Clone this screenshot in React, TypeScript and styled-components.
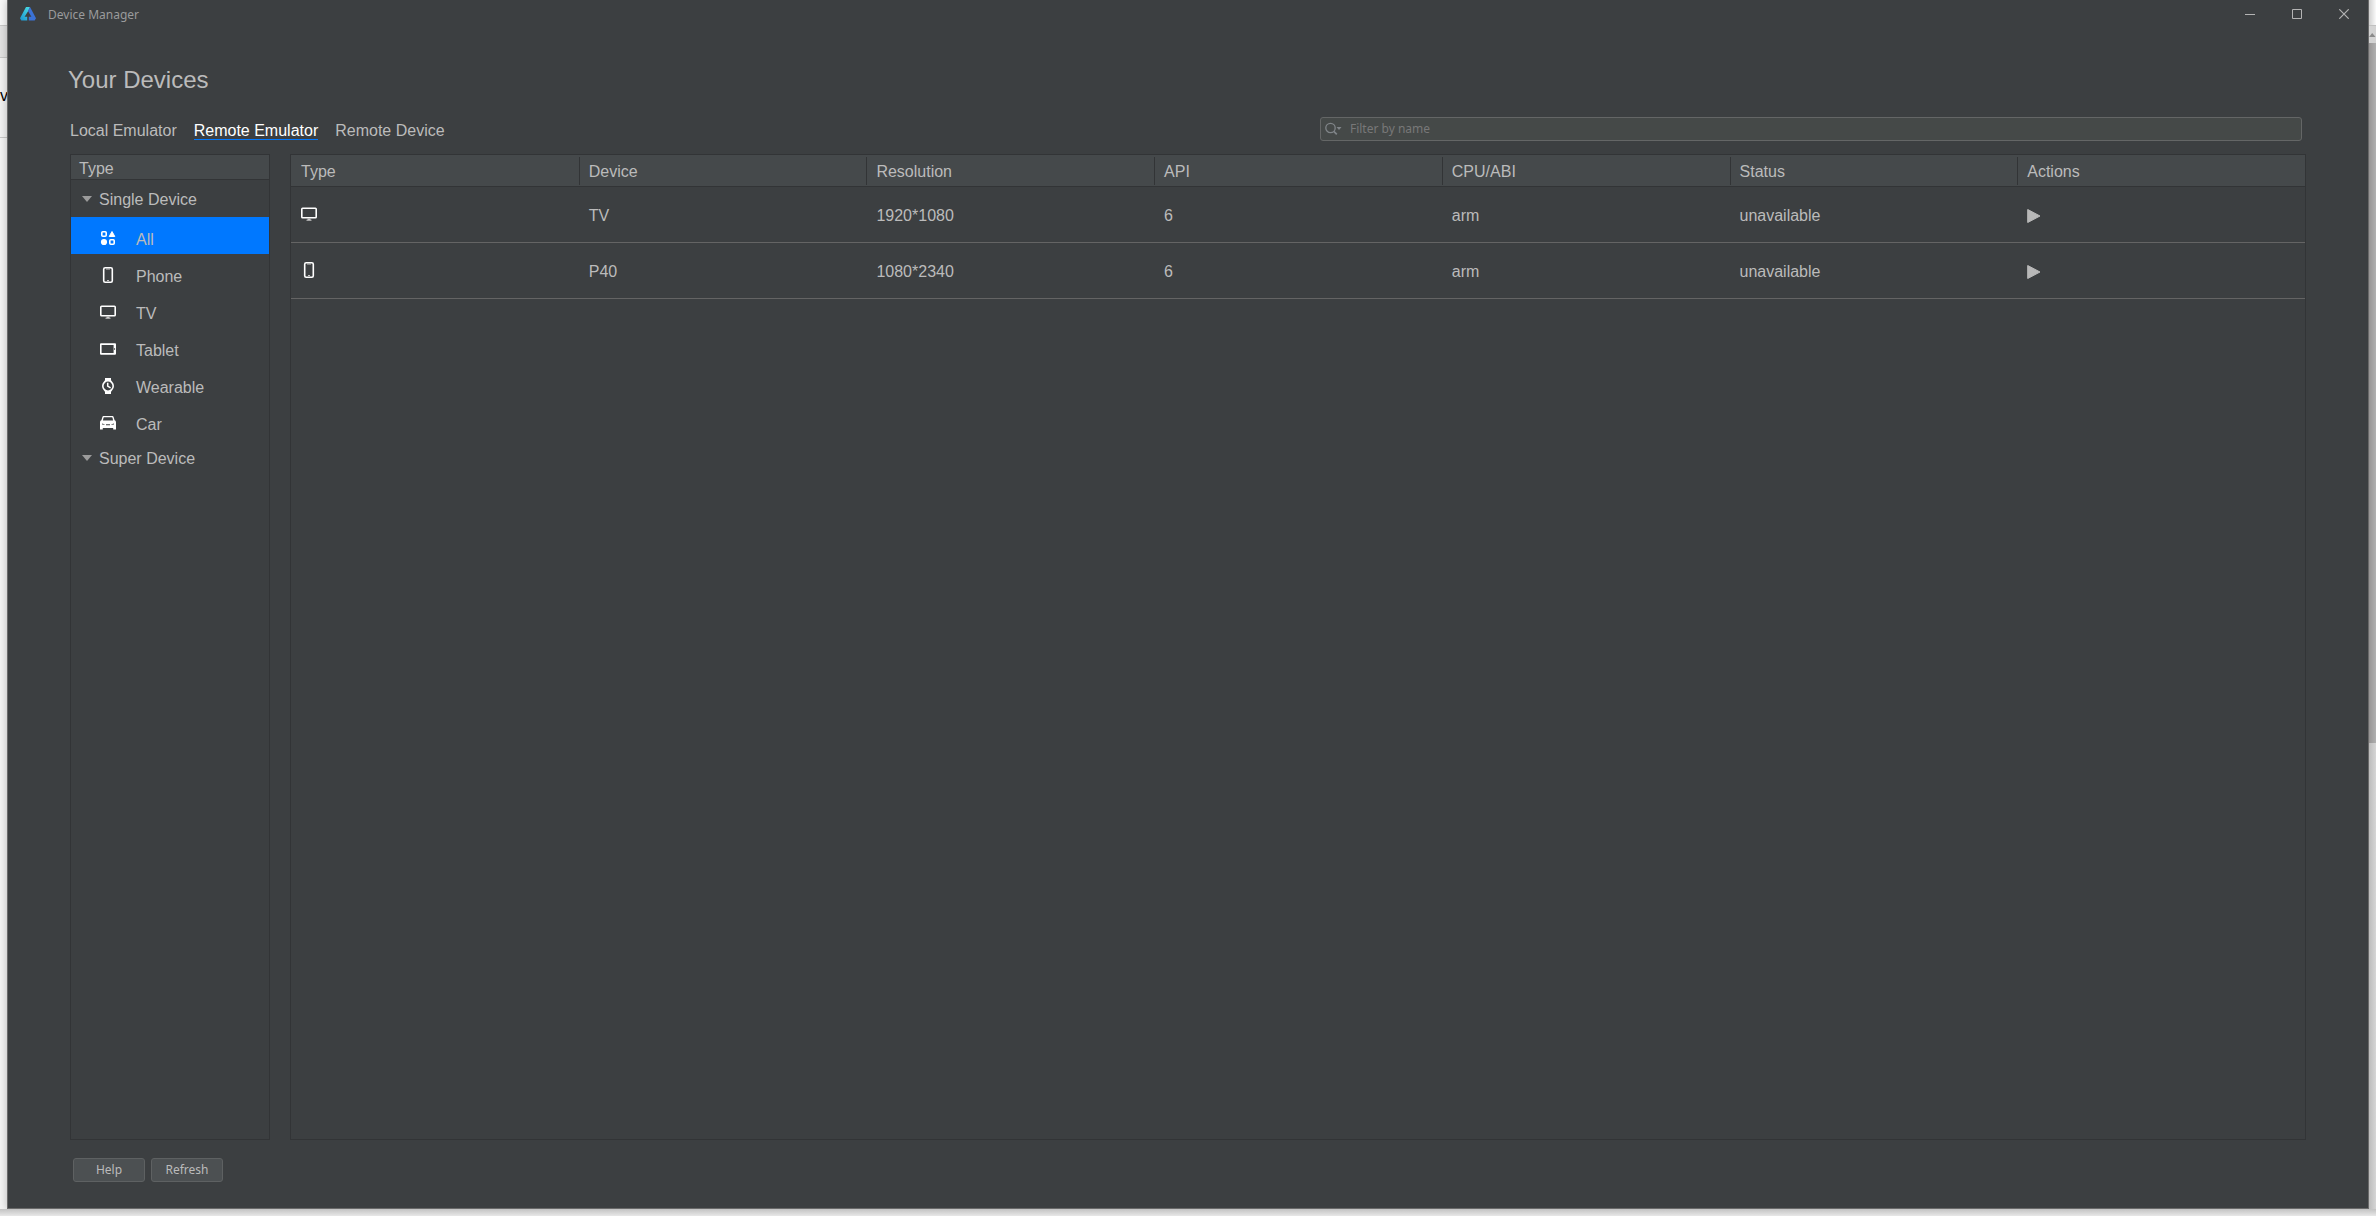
import React, { useState } from "react";
import styled, { createGlobalStyle } from "styled-components";

const color = {
  window: "#3c3f41",
  header: "#45494b",
  line: "#323436",
  rowLine: "#646464",
  text: "#bbbbbb",
  faint: "#9a9b9c",
  select: "#0078ff",
};
const sans = `"Liberation Sans", Arial, sans-serif`;
const ui = `"Noto Sans", "Segoe UI", sans-serif`;

const GlobalStyle = createGlobalStyle`
  *, *::before, *::after { box-sizing: border-box; }
  body { margin: 0; font-family: ${sans}; font-size: 16px; color: ${color.text}; background: #f4f4f4; }
  button { font: inherit; color: inherit; background: none; border: 0; padding: 0; cursor: pointer; }
  svg { display: block; flex: none; }
  ul { list-style: none; margin: 0; padding: 0; }
`;

const Desktop = styled.div`
  display: grid;
  grid-template: minmax(0, 1fr) 7px / 7px minmax(0, 1fr) 7px;
  height: 100vh;
  overflow: hidden;
`;
const LeftEdge = styled.div`
  display: flex;
  flex-direction: column;
  overflow: hidden;
  color: #000;
  line-height: 20px;
`;
const EdgeBand = styled.div<{ $height: number; $bg: string }>`
  flex: none;
  height: ${(p) => p.$height}px;
  padding-top: ${(p) => (p.$height > 60 ? 28 : 0)}px;
  background: ${(p) => p.$bg};
  border-bottom: 1px solid #c8c8c8;
`;
const RightEdge = styled.div`
  display: flex;
  flex-direction: column;
  overflow: hidden;
  background: linear-gradient(90deg, #bcbcbc, #d6d6d6);
`;
const ScrollTop = styled.div`
  height: 26px;
  background: linear-gradient(90deg, #d0d0d0, #fafafa);
  border-bottom: 1px solid #c0c0c0;
`;
const ScrollArrow = styled.div`
  height: 17px;
  padding-top: 7px;
  background: #d3d3d3;
`;
const ScrollThumb = styled.div`
  height: 700px;
  background: linear-gradient(90deg, #969494, #b0b0b0);
`;
const BottomEdge = styled.div`
  grid-column: 1 / -1;
  background: linear-gradient(#c2c2c2, #e8e8e8);
`;

const Window = styled.main`
  display: flex;
  flex-direction: column;
  background: ${color.window};
  border: 1px solid #6a6a6a;
  border-top: 0;
  box-shadow: 0 0 8px rgba(0, 0, 0, 0.25);
`;
const TitleBar = styled.header`
  display: flex;
  align-items: center;
  gap: 12px;
  height: 28px;
  padding: 0 1px 0 12px;
  font: 12px/20px ${ui};
  color: ${color.faint};
`;
const TitleText = styled.span`
  flex: 1;
  padding-top: 1px;
`;
const WindowButtons = styled.div`
  display: flex;
`;
const WindowButton = styled.button`
  display: grid;
  place-items: center;
  width: 47px;
  height: 28px;
  color: #b4b4b4;
`;

const Content = styled.div`
  flex: 1;
  min-height: 0;
  display: flex;
  flex-direction: column;
  padding: 36px 62px 26px;
`;
const Heading = styled.h1`
  margin: 0 0 21px -2px;
  font-size: 24px;
  font-weight: 400;
  line-height: 32px;
`;
const Toolbar = styled.div`
  display: flex;
  justify-content: space-between;
  height: 24px;
  margin-bottom: 13px;
  padding-right: 4px;
`;
const Tabs = styled.div`
  display: flex;
  align-items: flex-start;
  gap: 17px;
`;
const Tab = styled.button<{ $active: boolean }>`
  padding-top: 6px;
  line-height: 16px;
  white-space: nowrap;
  color: ${(p) => (p.$active ? "#ffffff" : color.text)};
  border-bottom: 1px solid ${(p) => (p.$active ? color.select : "transparent")};
`;
const SearchBox = styled.label`
  display: flex;
  align-items: center;
  gap: 8px;
  width: 44%;
  padding-left: 4px;
  background: #454948;
  border: 1px solid #646666;
  border-radius: 3px;
  color: #808589;
`;
const SearchInput = styled.input`
  flex: 1;
  min-width: 0;
  padding: 0;
  border: 0;
  outline: 0;
  background: none;
  font: 12px/20px ${ui};
  color: ${color.text};
  &::placeholder {
    color: #787878;
    opacity: 1;
  }
`;

const Panels = styled.div`
  flex: 1;
  min-height: 0;
  display: grid;
  grid-template-columns: 200px minmax(0, 1fr);
  gap: 20px;
`;
const Panel = styled.section`
  border: 1px solid ${color.line};
  overflow: hidden;
`;
const PanelTitle = styled.h2`
  margin: 0;
  padding: 3px 8px 0;
  height: 25px;
  font-size: 16px;
  font-weight: 400;
  line-height: 21px;
  background: ${color.header};
  border-bottom: 1px solid ${color.line};
`;
const Group = styled.button`
  display: flex;
  align-items: center;
  gap: 7px;
  width: 100%;
  height: 37px;
  padding: 2px 11px 0;
  text-align: left;
`;
const Item = styled.button<{ $active: boolean }>`
  display: flex;
  align-items: center;
  gap: 20px;
  width: 100%;
  height: 37px;
  padding: 8px 0 0 29px;
  text-align: left;
  background: ${(p) => (p.$active ? color.select : "transparent")};
  svg {
    margin-bottom: 3px;
  }
`;

const Table = styled.table`
  width: 100%;
  table-layout: fixed;
  border-spacing: 0;
  text-align: left;
`;
const HeadCell = styled.th`
  height: 32px;
  padding: 2px 10px 0;
  font-weight: 400;
  border-bottom: 1px solid ${color.line};
  background-color: ${color.header};
  & + & {
    background-image: linear-gradient(${color.line}, ${color.line});
    background-repeat: no-repeat;
    background-position: left center;
    background-size: 1px 28px;
  }
`;
const Cell = styled.td`
  height: 56px;
  padding: 2px 10px 0;
  border-bottom: 1px solid ${color.rowLine};
`;
const KindCell = styled(Cell)`
  padding: 0 10px 2px;
`;
const PlayButton = styled.button`
  display: block;
`;

const Footer = styled.footer`
  display: flex;
  gap: 6px;
  margin-top: 18px;
  padding-left: 3px;
`;
const FooterButton = styled.button`
  width: 72px;
  height: 24px;
  font: 12px/20px ${ui};
  background: #4c5052;
  border: 1px solid #5e6162;
  border-radius: 3px;
`;

const Svg = ({ children, w = 16, h = 16, label }: { children: React.ReactNode; w?: number; h?: number; label?: string }) => (
  <svg width={w} height={h} viewBox={`0 0 ${w} ${h}`} fill="none" role={label ? "img" : undefined} aria-label={label} aria-hidden={label ? undefined : true}>
    {children}
  </svg>
);

const Logo = () => (
  <svg width="16" height="16" viewBox="0 0 16 16" aria-hidden="true">
    <defs>
      <linearGradient id="logoTeal" x1="0" y1="1" x2="0.7" y2="0">
        <stop offset="0" stopColor="#1b93cf" />
        <stop offset="1" stopColor="#45d5e0" />
      </linearGradient>
    </defs>
    <path d="M6 1h4L8.200 5 4.600 10.800H7.200V14.500H1.300L0 12.200z" fill="url(#logoTeal)" />
    <path d="M10 1l6 11.200-1.300 2.300H8.800v-3.700h2.600L8 5z" fill="#3b72d6" />
  </svg>
);
const AllIcon = () => (
  <Svg>
    <rect x="1.800" y="1.800" width="4.400" height="4.400" rx="1" stroke="#fff" strokeWidth="1.600" />
    <rect x="9.800" y="9.800" width="4.400" height="4.400" rx="1" stroke="#fff" strokeWidth="1.600" />
    <circle cx="4" cy="12" r="3.100" fill="#fff" />
    <path d="M12 1.500 14.800 6.500H9.200z" fill="#fff" stroke="#fff" strokeLinejoin="round" />
  </Svg>
);
const PhoneIcon = ({ label }: { label?: string }) => (
  <Svg label={label}>
    <rect x="3.700" y=".8" width="8.600" height="14.400" rx="1.500" stroke="#fff" strokeWidth="1.600" />
    <path d="M6 2h4M7 13.500h2" stroke="#c5c5c5" />
  </Svg>
);
const TvIcon = ({ label }: { label?: string }) => (
  <Svg label={label}>
    <rect x=".8" y="2.300" width="14.400" height="9.400" rx=".8" stroke="#fff" strokeWidth="1.600" />
    <path d="M6.500 12.500h3v1.200h1v1h-5v-1h1z" fill="#c8c8c8" />
  </Svg>
);
const TabletIcon = () => (
  <Svg>
    <path
      d="M1 2.200h14a1 1 0 0 1 1 1v9.600a1 1 0 0 1-1 1H1a1 1 0 0 1-1-1V3.200a1 1 0 0 1 1-1zM1.600 4v8h12V4z"
      fill="#fff"
      fillRule="evenodd"
    />
    <path d="M14.600 7v2" stroke="#6b6b6b" />
  </Svg>
);
const WatchIcon = () => (
  <Svg>
    <path d="M5 0h6v2l1 2H4l1-2zM4 12h8l-1 2v2H5v-2z" fill="#fff" />
    <circle cx="8" cy="8" r="5.200" fill={color.window} stroke="#fff" strokeWidth="1.600" />
    <path d="M7.700 4.800v3.300l2.900 1.700" stroke="#fff" strokeWidth="1.500" />
  </Svg>
);
const CarIcon = () => (
  <Svg>
    <path
      d="M4 1h8c1 0 1.500.5 1.800 1.400l.8 2.800c.9.400 1.400 1.200 1.400 2.200v7.100h-2.800V13H2.800v1.500H0V7.400C0 6.400.5 5.600 1.400 5.200l.8-2.800C2.500 1.500 3 1 4 1zM4.200 2.300c-.4 0-.6.2-.7.500L2.900 5.400h10.200l-.6-2.600c-.1-.3-.3-.5-.7-.5zM2 8.600v1l2.600.2V9.200zM14 8.600l-2.600.6v.6l2.600-.2zM6 9.300v.9h4v-.9z"
      fill="#fff"
      fillRule="evenodd"
    />
  </Svg>
);
const Chevron = () => (
  <Svg w={10} h={8}>
    <path d="M0 0h10L5 6z" fill="#9b9b9b" />
  </Svg>
);

const deviceKinds = [
  { name: "All", Icon: AllIcon },
  { name: "Phone", Icon: PhoneIcon },
  { name: "TV", Icon: TvIcon },
  { name: "Tablet", Icon: TabletIcon },
  { name: "Wearable", Icon: WatchIcon },
  { name: "Car", Icon: CarIcon },
];
const tabs = ["Local Emulator", "Remote Emulator", "Remote Device"];
const columns = ["Type", "Device", "Resolution", "API", "CPU/ABI", "Status", "Actions"];
const devices = [
  { kind: "TV", Icon: TvIcon, cells: ["TV", "1920*1080", "6", "arm", "unavailable"] },
  { kind: "Phone", Icon: PhoneIcon, cells: ["P40", "1080*2340", "6", "arm", "unavailable"] },
];

export default function App() {
  const [tab, setTab] = useState("Remote Emulator");
  const [kind, setKind] = useState("All");
  const [query, setQuery] = useState("");
  const shown = devices.filter(
    (d) => (kind === "All" || d.kind === kind) && d.cells[0].toLowerCase().includes(query.toLowerCase())
  );

  return (
    <>
      <GlobalStyle />
      <Desktop>
        <LeftEdge>
          <EdgeBand $height={26} $bg="#f8f8f8" />
          <EdgeBand $height={32} $bg="#e2e2e2" />
          <EdgeBand $height={80} $bg="#f2f2f2">v</EdgeBand>
        </LeftEdge>
        <Window>
          <TitleBar>
            <Logo />
            <TitleText>Device Manager</TitleText>
            <WindowButtons>
              <WindowButton aria-label="Minimize">
                <Svg w={10} h={10}>
                  <path d="M0 5.500h10" stroke="currentColor" />
                </Svg>
              </WindowButton>
              <WindowButton aria-label="Maximize">
                <Svg w={10} h={10}>
                  <path d="M.5.5h9v9h-9z" stroke="currentColor" />
                </Svg>
              </WindowButton>
              <WindowButton aria-label="Close">
                <Svg w={10} h={10}>
                  <path d="M.3.3l9.400 9.400M9.700.3L.3 9.700" stroke="currentColor" strokeWidth="1.200" />
                </Svg>
              </WindowButton>
            </WindowButtons>
          </TitleBar>
          <Content>
            <Heading>Your Devices</Heading>
            <Toolbar>
              <Tabs role="tablist">
                {tabs.map((t) => (
                  <Tab key={t} role="tab" aria-selected={t === tab} $active={t === tab} onClick={() => setTab(t)}>
                    {t}
                  </Tab>
                ))}
              </Tabs>
              <SearchBox>
                <Svg w={17} h={14}>
                  <circle cx="5.500" cy="6" r="4.700" stroke="currentColor" strokeWidth="1.300" />
                  <path d="M8.800 9.300l3 3" stroke="currentColor" strokeWidth="1.700" />
                  <path d="M11.500 5h5L14 8z" fill="currentColor" />
                </Svg>
                <SearchInput
                  aria-label="Filter by name"
                  placeholder="Filter by name"
                  value={query}
                  onChange={(e) => setQuery(e.target.value)}
                />
              </SearchBox>
            </Toolbar>
            <Panels>
              <Panel>
                <PanelTitle>Type</PanelTitle>
                <Group aria-expanded="true">
                  <Chevron />
                  Single Device
                </Group>
                <ul>
                  {deviceKinds.map(({ name, Icon }) => (
                    <li key={name}>
                      <Item $active={name === kind} onClick={() => setKind(name)}>
                        <Icon />
                        {name}
                      </Item>
                    </li>
                  ))}
                </ul>
                <Group aria-expanded="true">
                  <Chevron />
                  Super Device
                </Group>
              </Panel>
              <Panel>
                <Table>
                  <thead>
                    <tr>
                      {columns.map((c) => (
                        <HeadCell key={c} scope="col">
                          {c}
                        </HeadCell>
                      ))}
                    </tr>
                  </thead>
                  <tbody>
                    {shown.map(({ kind: k, Icon, cells }) => (
                      <tr key={k}>
                        <KindCell>
                          <Icon label={k} />
                        </KindCell>
                        {cells.map((value, i) => (
                          <Cell key={i}>{value}</Cell>
                        ))}
                        <Cell>
                          <PlayButton aria-label={`Run ${cells[0]}`}>
                            <Svg w={14} h={14}>
                              <path d="M.7.5 13 7 .7 13.500z" fill="#b8b8b8" stroke="#b8b8b8" strokeLinejoin="round" />
                            </Svg>
                          </PlayButton>
                        </Cell>
                      </tr>
                    ))}
                  </tbody>
                </Table>
              </Panel>
            </Panels>
            <Footer>
              <FooterButton>Help</FooterButton>
              <FooterButton>Refresh</FooterButton>
            </Footer>
          </Content>
        </Window>
        <RightEdge>
          <ScrollTop />
          <ScrollArrow>
            <Svg w={7} h={4}>
              <path d="M0 4h6.500L3.200 0z" fill="#8a8a8a" />
            </Svg>
          </ScrollArrow>
          <ScrollThumb />
        </RightEdge>
        <BottomEdge />
      </Desktop>
    </>
  );
}
